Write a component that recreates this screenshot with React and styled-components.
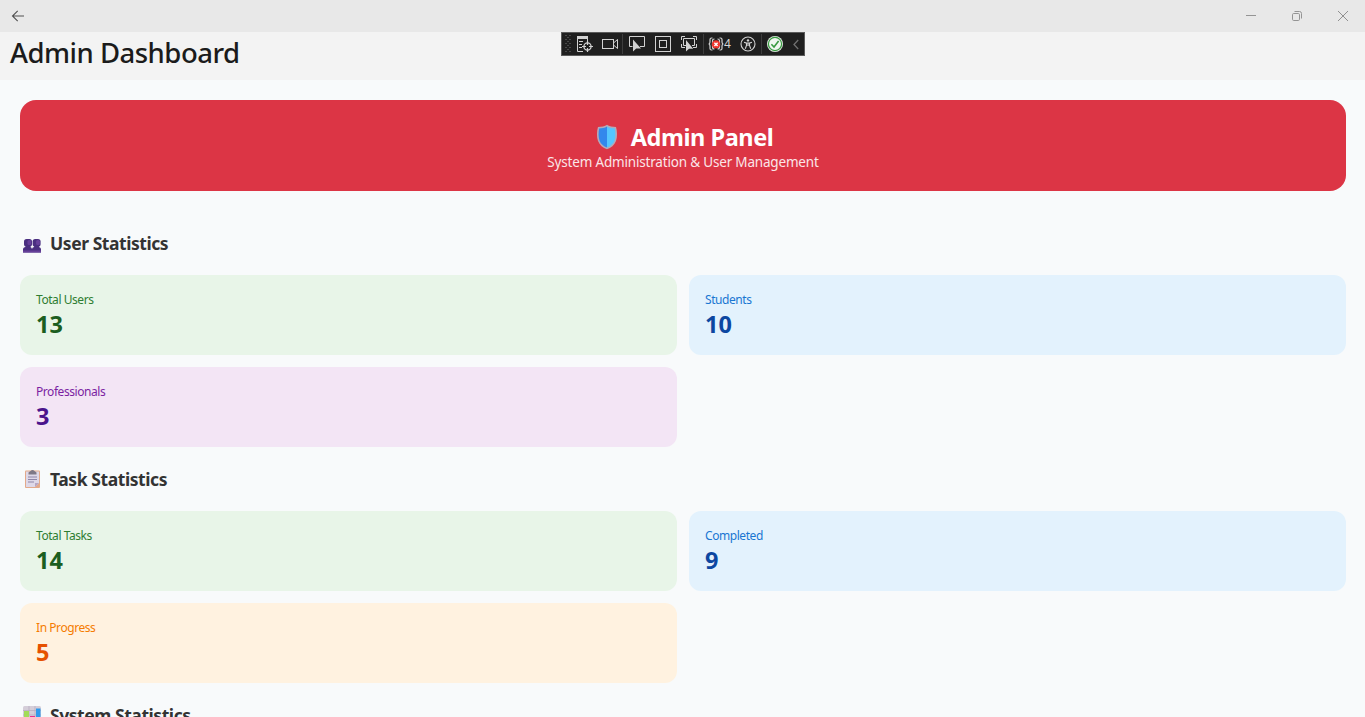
import React from "react";
import styled, { createGlobalStyle } from "styled-components";

const GlobalStyle = createGlobalStyle`
  * { box-sizing: border-box; }
  html, body { margin: 0; height: 717px; overflow: hidden; }
  body { font-family: "Noto Sans", "Open Sans", sans-serif; background: #f8fafb; }
  svg { display: block; flex: none; }
`;

const Window = styled.div`
  position: relative;
  display: flex;
  flex-direction: column;
  width: 1365px;
  height: 717px;
  overflow: hidden;
`;

const TitleBar = styled.div`
  display: flex;
  justify-content: space-between;
  align-items: center;
  flex: none;
  height: 32px;
  padding: 0 16px 0 11px;
  background: #e8e8e8;
`;

const WindowControls = styled.div`
  display: flex;
  gap: 34px;
`;

const PageHeader = styled.header`
  flex: none;
  height: 48px;
  padding-left: 10px;
  background: #f3f3f3;
`;

const PageTitle = styled.h1`
  margin: 0;
  font-size: 27.5px;
  line-height: 42px;
  font-weight: 500;
  letter-spacing: ${(p) => p.$track}px;
  white-space: nowrap;
  color: #1b1b1b;
  width: max-content;
`;

const DebugBar = styled.div`
  position: absolute;
  left: 561px;
  top: 32px;
  display: flex;
  align-items: center;
  width: 244px;
  height: 24px;
  padding-left: 2px;
  border: 1px solid #5a5a5a;
  background: #1f1f1f;
`;

const Tool = styled.div`
  display: flex;
  align-items: center;
  justify-content: center;
  flex: none;
  width: ${(p) => p.$w || 26}px;
  height: 22px;
`;

const Separator = styled.div`
  flex: none;
  width: 1px;
  height: 20px;
  background: #3d3d3d;
`;

const FailureCount = styled.span`
  font-size: 12px;
  line-height: 16px;
  color: #d6d6d6;
`;

const Content = styled.main`
  flex: 1;
  min-height: 0;
  overflow: hidden;
  padding: 20px 19px 0 20px;
`;

const Banner = styled.section`
  display: flex;
  flex-direction: column;
  align-items: center;
  height: 91px;
  padding-top: 21px;
  border-radius: 16px;
  background: #dc3545;
  color: #fff;
`;

const BannerTitle = styled.div`
  display: flex;
  align-items: center;
  gap: 13px;
  height: 32px;
  padding-left: 3px;
  font-size: 23.5px;
  font-weight: 700;
  letter-spacing: ${(p) => p.$track}px;
  white-space: nowrap;
`;

const BannerSubtitle = styled.div`
  font-size: 13.5px;
  line-height: 19px;
  letter-spacing: ${(p) => p.$track}px;
  white-space: nowrap;
  color: #fbe5e8;
`;

const Section = styled.section`
  margin-top: ${(p) => p.$top}px;
`;

const SectionTitle = styled.h2`
  display: flex;
  align-items: center;
  gap: 7px;
  height: 24px;
  margin: 0 0 20px;
  padding-left: 2px;
  font-size: 17.5px;
  font-weight: 700;
  letter-spacing: ${(p) => p.$track}px;
  white-space: nowrap;
  color: #333;
`;

const CardGrid = styled.div`
  display: grid;
  grid-template-columns: 1fr 1fr;
  grid-auto-rows: 80px;
  gap: 12px;
`;

const tones = {
  green: ["#e8f5e8", "#2e7d32", "#1b5e20"],
  blue: ["#e3f2fd", "#1976d2", "#0d47a1"],
  purple: ["#f3e5f5", "#7b1fa2", "#4a148c"],
  orange: ["#fff2e0", "#f57c00", "#e65100"],
};

const Card = styled.div`
  padding: 16px;
  border-radius: 12px;
  background: ${(p) => tones[p.$tone][0]};
`;

const CardLabel = styled.div`
  width: max-content;
  font-size: 12px;
  line-height: 17px;
  letter-spacing: ${(p) => p.$track}px;
  color: ${(p) => tones[p.$tone][1]};
`;

const CardValue = styled.div`
  width: max-content;
  font-size: 23.5px;
  line-height: 32px;
  font-weight: 700;
  color: ${(p) => tones[p.$tone][2]};
`;

const BackIcon = () => (
  <svg width="14" height="14" viewBox="0 0 14 14" fill="none" stroke="#505050" strokeWidth="1.1">
    <path d="M13 7H1.500M6.700 1.800L1.500 7l5.200 5.200" />
  </svg>
);

const MinimizeIcon = () => (
  <svg width="12" height="12" viewBox="0 0 12 12" stroke="#949494">
    <path d="M1 5.500h10" />
  </svg>
);

const RestoreIcon = () => (
  <svg width="12" height="12" viewBox="0 0 12 12" fill="none" stroke="#949494">
    <rect x="1.500" y="3.500" width="7" height="7" rx="1.200" />
    <path d="M3.500 1.500h5a2 2 0 0 1 2 2v5" />
  </svg>
);

const CloseIcon = () => (
  <svg width="12" height="12" viewBox="0 0 12 12" stroke="#909090">
    <path d="M1 1l10 10M11 1L1 11" />
  </svg>
);

const GripIcon = () => (
  <svg width="6" height="18" viewBox="0 0 6 18" fill="#484848">
    {[0, 1, 2, 3, 4, 5, 6, 7, 8].map((r) => (
      <g key={r}>
        <rect x={r % 2 ? 2 : 0} y={r * 2} width="2" height="1" />
        {r % 2 === 0 && <rect x="4" y={r * 2} width="2" height="1" />}
      </g>
    ))}
  </svg>
);

const TreeTargetIcon = () => (
  <svg width="16" height="16" viewBox="0 0 16 16" fill="none" stroke="#d2d2d2">
    <path d="M0 1.500h11" strokeWidth="3" />
    <path d="M.5 2v13.500H6M10.500 2v3M2 5.500h4M2 8.500h3M2 11.500h3" />
    <circle cx="10.500" cy="10.500" r="3.600" strokeWidth="1.300" />
    <path d="M10.500 5v4M10.500 12v4M5 10.500h4M12 10.500h4" strokeWidth="1.200" />
  </svg>
);

const CameraIcon = () => (
  <svg width="16" height="16" viewBox="0 0 16 16" fill="none" stroke="#d2d2d2">
    <rect x=".5" y="3.500" width="11" height="9" />
    <path d="M11.500 7l4-3.500v9l-4-3.500" />
  </svg>
);

const SelectElementIcon = () => (
  <svg width="16" height="16" viewBox="0 0 16 16" fill="none" stroke="#d2d2d2">
    <path d="M3.500 10.500H.5v-10h15v10H11" />
    <path d="M4 3.500v12l3.200-3H12z" fill="#d2d2d2" stroke="none" />
  </svg>
);

const LayoutIcon = () => (
  <svg width="16" height="16" viewBox="0 0 16 16" fill="none" stroke="#d2d2d2">
    <rect x=".5" y=".5" width="15" height="15" />
    <rect x="4.500" y="4.500" width="7" height="7" />
  </svg>
);

const TrackFocusIcon = () => (
  <svg width="16" height="16" viewBox="0 0 16 16" fill="none" stroke="#d2d2d2">
    <path d="M.5 4V.5H4M12 .5h3.500V4M.5 8v3.500H4M12 11.500h3.500V8" />
    <path d="M5 9.500H2.500v-7h11v7H11" />
    <path d="M5 4v11.500l3-2.700h4.200z" fill="#d2d2d2" stroke="none" />
  </svg>
);

const BindingFailureIcon = () => (
  <svg width="16" height="16" viewBox="0 0 16 16" fill="none" stroke="#d2d2d2" strokeWidth="1.200">
    <path d="M4.500 2H3.500Q2 2 2 3.500v2Q2 8 .6 8 2 8 2 10.500v2Q2 14 3.500 14h1M11.500 2h1Q14 2 14 3.500v2Q14 8 15.400 8 14 8 14 10.500v2q0 1.500-1.500 1.500h-1" />
    <path d="M6.500 3Q4.500 3 4.500 5v6q0 2 2 2M9.500 3q2 0 2 2v6q0 2-2 2" />
    <circle cx="8" cy="8.400" r="4.200" fill="#f0362f" stroke="none" />
    <path d="M6.400 6.800l3.200 3.200M9.600 6.800L6.400 10" stroke="#fff" strokeWidth="1.400" />
  </svg>
);

const AccessibilityIcon = () => (
  <svg width="16" height="16" viewBox="0 0 16 16" fill="none" stroke="#d2d2d2" strokeWidth="1.100">
    <circle cx="8" cy="8" r="7" />
    <circle cx="8" cy="4.400" r="1.200" fill="#d2d2d2" stroke="none" />
    <path d="M4 6.300l2.500.8h3l2.500-.8M6.500 7v2.500L5.300 12.700M9.500 7v2.500l1.200 3.200M6.500 9.500L8 8.800l1.500.7" />
  </svg>
);

const HotReloadIcon = () => (
  <svg width="16" height="16" viewBox="0 0 16 16" fill="none">
    <circle cx="8" cy="8" r="8" fill="#e4eee4" />
    <circle cx="8" cy="8" r="6.600" fill="#f0f6f0" stroke="#389a40" strokeWidth="1.200" />
    <path d="M4.400 8.300l2.600 2.700 4.600-6" stroke="#389a40" strokeWidth="1.600" />
  </svg>
);

const CollapseIcon = () => (
  <svg width="6" height="12" viewBox="0 0 6 12" fill="none" stroke="#707070" strokeWidth="1.300">
    <path d="M5.200 2L1 6.500 5.200 11" />
  </svg>
);

const ShieldIcon = () => (
  <svg width="22" height="26" viewBox="0 0 22 26">
    <path d="M11 .8C9 2.600 5 3 2 3 .7 7 .5 13 2 17c1.500 4 5 7 9 8.300 4-1.300 7.500-4.300 9-8.300 1.500-4 1.300-10 0-14-3 0-7-.4-9-2.200z" fill="#b5a9b8" />
    <path d="M11 2.600C9 4 5.500 4.500 3.200 4.500c-.9 4-.8 8.500.3 12C4.800 20 7.500 22.300 11 23.600z" fill="#3388ec" />
    <path d="M11 2.600c2 1.400 5.500 1.900 7.800 1.900.9 4 .8 8.500-.3 12-1.300 3.500-4 5.800-7.500 7.100z" fill="#55c6ff" />
  </svg>
);

const PeopleIcon = () => (
  <svg width="21" height="22" viewBox="0 0 21 22">
    <g fill="#4a2f80">
      <path d="M1 20.500v-3Q1 15.200 3.800 15h3.700q2.300.2 2.500 2 .2-1.800 2.500-2h3.700q2.800.2 2.800 2.500v3z" />
      <rect x="2" y="7" width="8" height="7.600" rx="2.600" />
      <rect x="3.500" y="13" width="5" height="3" />
      <rect x="10.600" y="7" width="8" height="7.600" rx="2.600" />
      <rect x="12.100" y="13" width="5" height="3" />
    </g>
    <g fill="#67409a">
      <rect x="1" y="18.500" width="18" height="2" />
      <rect x="5.500" y="8" width="3.800" height="5" rx="1.600" />
      <rect x="14.100" y="8" width="3.800" height="5" rx="1.600" />
    </g>
  </svg>
);

const ClipboardIcon = () => (
  <svg width="21" height="20" viewBox="0 0 21 20">
    <rect x="3" y="1.500" width="15" height="17.500" rx="1" fill="#e3a98a" />
    <path d="M4 2.500h13V14l-4 4H4z" fill="#ded8e8" />
    <path d="M13 18v-4h4z" fill="#b6a6c4" />
    <path d="M6.500 5.500V3.500L8.500 2Q10.500 0 12.500 2l2 1.500v2z" fill="#7e7886" />
    <path d="M6 8h9M6 10.500h9M6 13h6" stroke="#8f86a8" />
  </svg>
);

const ChartIcon = () => (
  <svg width="21" height="20" viewBox="0 0 21 20">
    <rect x="1" y="1" width="18" height="18" rx="1.500" fill="#d5ced9" />
    <path d="M1 5.500h18M1 10h18M7 1v18M13 1v18" stroke="#b9afc0" strokeWidth=".8" />
    <rect x="2" y="6" width="5" height="12.500" fill="#a2dc58" />
    <rect x="8" y="11" width="5" height="7.500" fill="#e8308c" />
    <rect x="14" y="3.500" width="4.500" height="15" fill="#2f9aec" />
  </svg>
);

const StatCard = ({ tone, label, value, track = -0.44 }) => (
  <Card $tone={tone}>
    <CardLabel $tone={tone} $track={track}>{label}</CardLabel>
    <CardValue $tone={tone}>{value}</CardValue>
  </Card>
);

export default function App() {
  return (
    <Window>
      <GlobalStyle />
      <TitleBar>
        <BackIcon />
        <WindowControls>
          <MinimizeIcon />
          <RestoreIcon />
          <CloseIcon />
        </WindowControls>
      </TitleBar>
      <PageHeader>
        <PageTitle $track={-0.5}>Admin Dashboard</PageTitle>
      </PageHeader>
      <Content>
        <Banner>
          <BannerTitle $track={-0.43}><ShieldIcon />Admin Panel</BannerTitle>
          <BannerSubtitle $track={-0.18}>System Administration &amp; User Management</BannerSubtitle>
        </Banner>
        <Section $top={40}>
          <SectionTitle $track={-0.44}><PeopleIcon />User Statistics</SectionTitle>
          <CardGrid>
            <StatCard tone="green" label="Total Users" value="13" />
            <StatCard tone="blue" label="Students" value="10" />
            <StatCard tone="purple" label="Professionals" value="3" />
          </CardGrid>
        </Section>
        <Section $top={20}>
          <SectionTitle $track={-0.42}><ClipboardIcon />Task Statistics</SectionTitle>
          <CardGrid>
            <StatCard tone="green" label="Total Tasks" value="14" />
            <StatCard tone="blue" label="Completed" value="9" />
            <StatCard tone="orange" label="In Progress" value="5" />
          </CardGrid>
        </Section>
        <Section $top={20}>
          <SectionTitle $track={-0.44}><ChartIcon />System Statistics</SectionTitle>
        </Section>
      </Content>
      <DebugBar>
        <Tool $w={7}><GripIcon /></Tool>
        <Tool $w={28}><TreeTargetIcon /></Tool>
        <Tool $w={22}><CameraIcon /></Tool>
        <Tool $w={1} />
        <Separator />
        <Tool $w={28}><SelectElementIcon /></Tool>
        <Tool $w={24}><LayoutIcon /></Tool>
        <Tool $w={28}><TrackFocusIcon /></Tool>
        <Separator />
        <Tool $w={31}><BindingFailureIcon /><FailureCount>4</FailureCount></Tool>
        <Tool $w={26}><AccessibilityIcon /></Tool>
        <Separator />
        <Tool $w={26}><HotReloadIcon /></Tool>
        <Tool $w={16}><CollapseIcon /></Tool>
      </DebugBar>
    </Window>
  );
}
